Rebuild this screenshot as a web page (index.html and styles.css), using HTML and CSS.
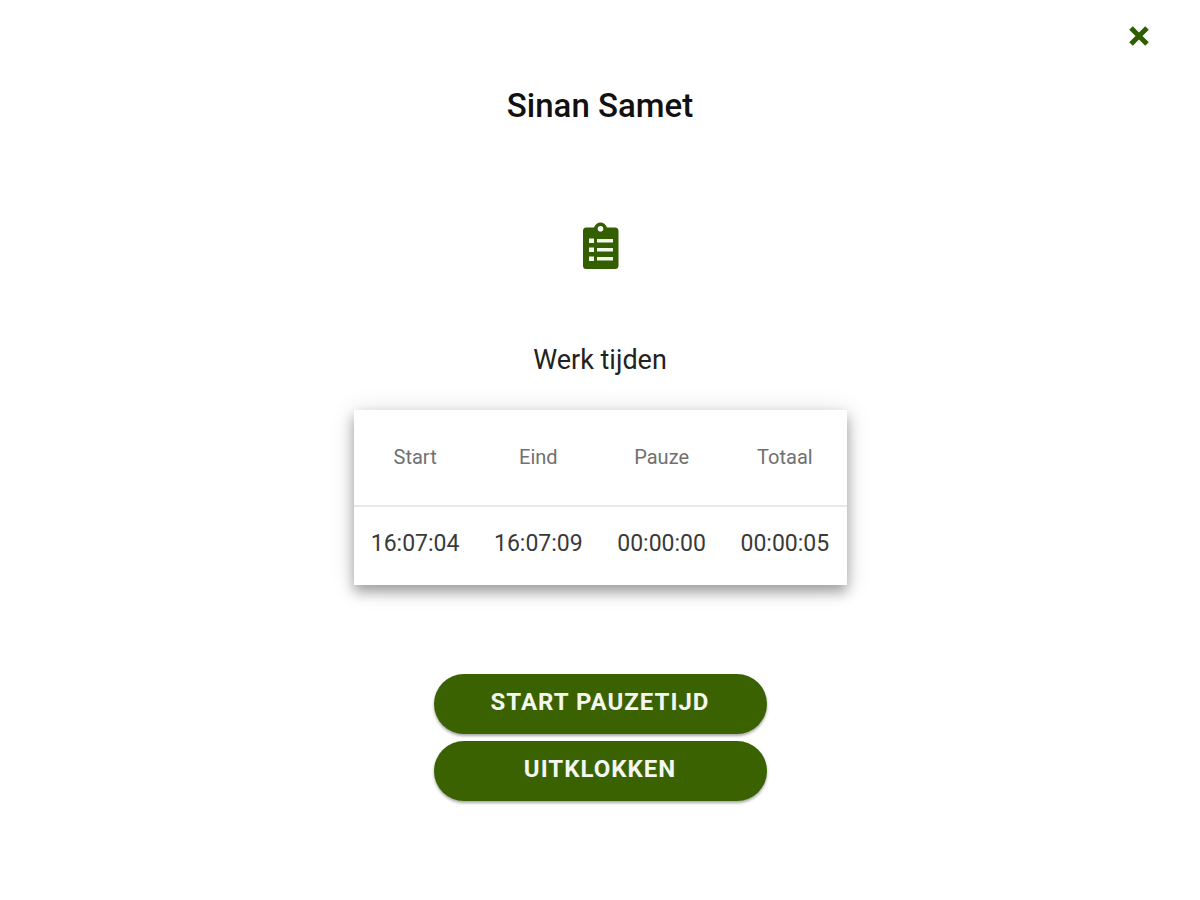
FILE: index.html
```html
<!DOCTYPE html>
<html lang="nl">
<head>
<meta charset="utf-8">
<meta name="viewport" content="width=device-width, initial-scale=1">
<title>Werk tijden</title>
<link rel="stylesheet" href="styles.css">
</head>
<body>
<header class="topbar">
  <button class="close" type="button" aria-label="Sluiten">
    <svg class="close-icon" viewBox="0 0 22 22" aria-hidden="true"><path d="M3 3L19 19M19 3L3 19"/></svg>
  </button>
</header>
<main class="content">
  <h1 class="name">Sinan Samet</h1>
  <svg class="clipboard" viewBox="0 0 38 48" aria-hidden="true">
    <path fill-rule="evenodd" d="M5 5.500H13C14 2.500 16.500 .5 19.500 .5S25 2.500 26 5.500H34Q37.500 5.500 37.500 9V43.500Q37.500 47 34 47H5Q2 47 2 43.500V9Q2 5.500 5 5.500ZM19.500 4A2.800 2.800 0 1 0 19.500 9.600A2.800 2.800 0 1 0 19.500 4Z"/>
    <path class="clipboard-lines" d="M8 16.500h5v4.500H8zM16 17h16v3.500H16zM8 25.500h5v4.500H8zM16 26h16v3.500H16zM8 34.500h5v4.500H8zM16 35h16v3.500H16z"/>
  </svg>
  <h2 class="subtitle">Werk tijden</h2>
  <table class="times">
    <thead>
      <tr><th scope="col">Start</th><th scope="col">Eind</th><th scope="col">Pauze</th><th scope="col">Totaal</th></tr>
    </thead>
    <tbody>
      <tr><td>16:07:04</td><td>16:07:09</td><td>00:00:00</td><td>00:00:05</td></tr>
    </tbody>
  </table>
  <div class="actions">
    <button class="action" type="button">START PAUZETIJD</button>
    <button class="action" type="button">UITKLOKKEN</button>
  </div>
</main>
</body>
</html>
```
FILE: styles.css
```css
* { box-sizing: border-box; }

body {
  margin: 0;
  background: #fff;
  color: #111;
  font-family: Roboto, "Liberation Sans", sans-serif;
}

.topbar {
  display: flex;
  justify-content: flex-end;
  padding: 20px 45px 0;
}

.close {
  display: flex;
  padding: 5px;
  border: 0;
  background: none;
  cursor: pointer;
}

.close-icon {
  width: 22px;
  height: 22px;
  fill: none;
  stroke: #2f5e00;
  stroke-width: 5;
}

.content {
  display: flex;
  flex-direction: column;
  align-items: center;
  padding: 34px 16px 48px;
}

.name {
  margin: 0;
  font-size: 33px;
  font-weight: 500;
  line-height: 40px;
}

.clipboard {
  width: 38px;
  height: 48px;
  margin-top: 96px;
  fill: #345f00;
}

.clipboard-lines { fill: #f2f6ed; }

.subtitle {
  margin: 74px 0 0;
  color: #222;
  font-size: 27px;
  font-weight: 400;
  line-height: 32px;
}

.times {
  width: 100%;
  max-width: 493px;
  margin-top: 34px;
  border-collapse: collapse;
  table-layout: fixed;
  background: #fff;
  box-shadow: 0 7px 12px rgba(0, 0, 0, 0.32), 0 2px 24px rgba(0, 0, 0, 0.14);
  text-align: center;
}

.times th {
  height: 96px;
  padding: 0 0 2px;
  border-bottom: 2px solid #e8e8e8;
  color: #707070;
  font-size: 20px;
  font-weight: 400;
}

.times td {
  height: 79px;
  padding: 0 0 6px;
  color: #3a3a3a;
  font-size: 23px;
}

.actions {
  display: grid;
  gap: 7px;
  width: 100%;
  max-width: 333px;
  margin-top: 89px;
}

.action {
  height: 60px;
  padding: 0 16px 4px;
  border: 0;
  border-radius: 30px;
  background: #3b6200;
  box-shadow: 0 2px 3px rgba(0, 0, 0, 0.35);
  color: #f4f6f0;
  font-family: inherit;
  font-size: 24px;
  font-weight: 700;
  letter-spacing: 1px;
  cursor: pointer;
}
```
